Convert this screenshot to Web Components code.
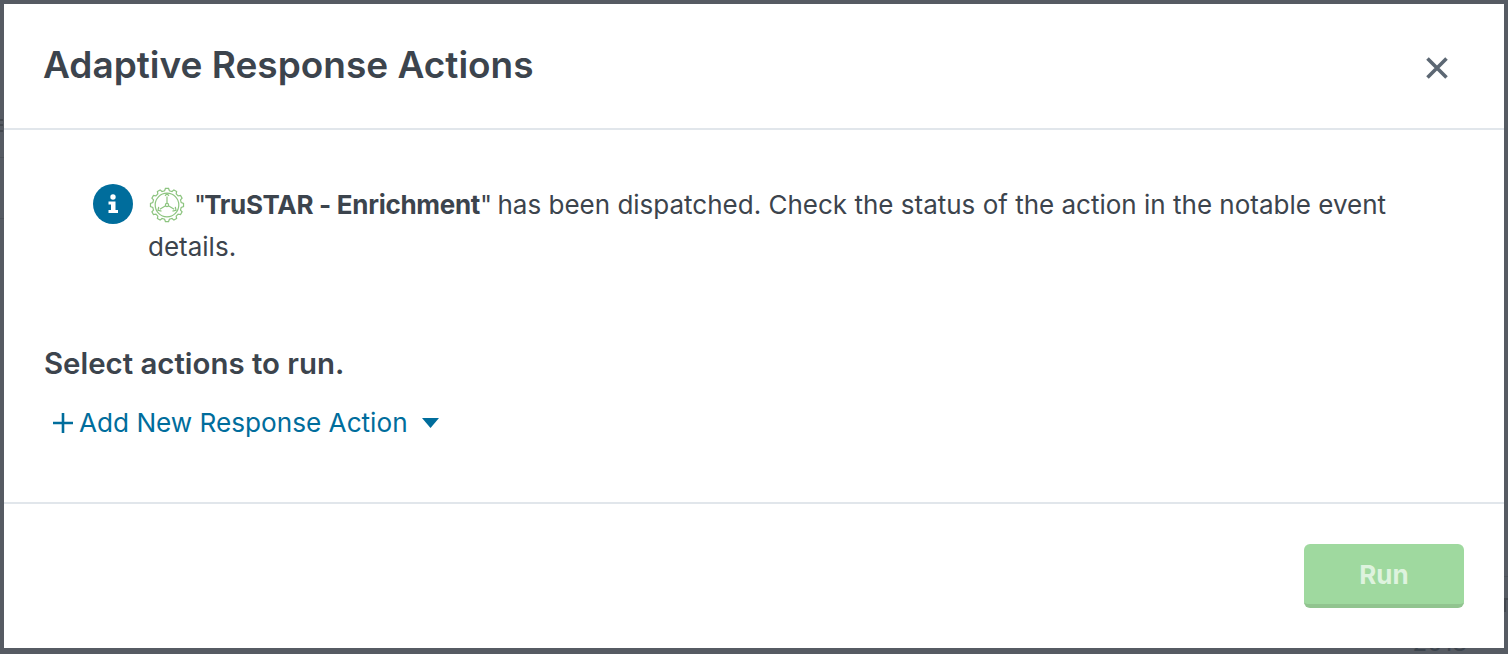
<!DOCTYPE html>
<html>
<head>
<meta charset="utf-8">
<title>Adaptive Response Actions</title>
<style>
html, body { margin: 0; height: 100%; overflow: hidden; }
body { font-family: Inter, "Liberation Sans", sans-serif; color: #3c444d; }
</style>
</head>
<body>
<template id="modal-tpl">
  <style>
  :host {
    display: block;
    height: 654px;
    box-sizing: border-box;
    padding: 4px 4px 6px 4px;
    background: #565b63;
    position: relative;
    overflow: hidden;
  }
  section {
    height: 100%;
    background: #fff;
    display: flex;
    flex-direction: column;
    position: relative;
    z-index: 1;
  }
  header {
    height: 126px;
    box-sizing: border-box;
    padding: 0 56px 0 39px;
    display: flex;
    align-items: center;
    justify-content: space-between;
    border-bottom: 2px solid #e1e6eb;
  }
  h1 {
    margin: 0 0 3px 0;
    font-size: 37px;
    font-weight: 600;
    color: #3c444d;
  }
  header svg { display: block; margin-top: 4px; }
  .body { flex: 1; display: flex; flex-direction: column; }
  footer {
    height: 146px;
    box-sizing: border-box;
    border-top: 2px solid #e1e6eb;
    padding: 40px 40px 0 0;
    display: flex;
    justify-content: flex-end;
    align-items: flex-start;
  }
  /* bits of the page behind the backdrop */
  .year { position: absolute; color: #3c444d; right: 41px; top: 628px; font-size: 24px; line-height: 30px; }
  .mark { position: absolute; height: 1px; background: #4d5259; }
  .dark { height: 2px; background: #43484f; }
  </style>
  <span class="year">2018</span>
  <div class="mark dark" style="left:0;width:3px;top:119px"></div>
  <div class="mark dark" style="left:0;width:3px;top:124px"></div>
  <div class="mark dark" style="left:0;width:3px;top:130px"></div>
  <div class="mark" style="left:0;width:4px;top:157px"></div>
  <div class="mark" style="left:0;width:4px;top:218px"></div>
  <div class="mark" style="right:0;width:4px;top:576px"></div>
  <div class="mark dark" style="right:0;width:3px;top:598px"></div>
  <div class="mark dark" style="right:2px;width:2px;height:14px;top:598px"></div>
  <section>
    <header>
      <h1></h1>
      <svg width="22" height="22" viewBox="0 0 22 22" fill="none" stroke="#5c6773" stroke-width="3.6">
        <path d="M1.5 1.5 L20.5 20.5 M20.5 1.5 L1.5 20.5"/>
      </svg>
    </header>
    <div class="body"><slot></slot></div>
    <footer><slot name="footer"></slot></footer>
  </section>
</template>

<template id="notice-tpl">
  <style>
  :host {
    display: block;
    padding: 54px 100px 0 89px;
  }
  .row { display: flex; gap: 15px; align-items: flex-start; }
  .info { flex: none; display: block; }
  p {
    margin: 0;
    font-size: 26px;
    line-height: 42px;
    color: #3c444d;
  }
  .gear { display: inline-block; vertical-align: -9px; margin: 0 9px 0 1px; }
  </style>
  <div class="row">
    <svg class="info" width="40" height="40" viewBox="0 0 40 40">
      <circle cx="20" cy="20" r="20" fill="#006d9c"/>
      <circle cx="20" cy="13" r="2.7" fill="#fff"/>
      <path d="M15.5 17.5 H22.5 V26 H25 V29 H15.5 V26 H18 V20.5 H15.5 Z" fill="#fff"/>
    </svg>
    <p><svg class="gear" width="36" height="36" viewBox="0 0 36 36" fill="none" stroke="#8cc47f" stroke-width="1.2">
      <path class="teeth"/>
      <circle cx="18" cy="18" r="11.8"/>
      <circle cx="18" cy="18" r="1.6"/>
      <path d="M18 16.4 V9.5 M16 8.8 L18 6.9 L20 8.8 M16.6 18.8 L10.8 22.2 M9.7 19.9 L9 23.4 L12.5 24.2 M19.4 18.8 L25.2 22.2 M26.3 19.9 L27 23.4 L23.5 24.2"/>
    </svg><slot></slot></p>
  </div>
</template>

<template id="actions-tpl">
  <style>
  :host {
    display: block;
    padding: 76px 40px 0 40px;
  }
  h2 {
    margin: 0;
    font-size: 29.4px;
    line-height: 40px;
    font-weight: 600;
    color: #3c444d;
  }
  a {
    display: inline-flex;
    align-items: center;
    margin: 19px 0 0 9px;
    color: #006d9c;
    font-size: 26.15px;
    line-height: 40px;
  }
  .plus { margin-right: 6px; }
  .caret { margin-left: 14px; }
  </style>
  <h2><slot name="title"></slot></h2>
  <a>
    <svg class="plus" width="20" height="20" viewBox="0 0 20 20" stroke="#006d9c" stroke-width="2.6">
      <path d="M0 10 H20 M10 0 V20"/>
    </svg>
    <slot name="link"></slot>
    <svg class="caret" width="17" height="10" viewBox="0 0 17 10"><path d="M0 0 H17 L8.5 10 Z" fill="#006d9c"/></svg>
  </a>
</template>

<template id="button-tpl">
  <style>
  :host {
    display: block;
    width: 160px;
    height: 64px;
    box-sizing: border-box;
    border-radius: 6px;
    background: #9fd99f;
    border-bottom: 4px solid #91c48f;
    color: #def3de;
    font-size: 26px;
    font-weight: 700;
    line-height: 62px;
    text-align: center;
  }
  </style>
  <slot></slot>
</template>

<arm-modal>
  <arm-notice><span style="letter-spacing:-2px">"</span><b style="font-size:26px;letter-spacing:-.3px;font-weight:700">TruSTAR - Enrichment</b><span style="letter-spacing:-2px">"</span> has been dispatched. Check the status of the action in the notable event details.</arm-notice>
  <arm-actions>
    <span slot="title">Select actions to run.</span>
    <span slot="link">Add New Response Action</span>
  </arm-actions>
  <arm-button slot="footer">Run</arm-button>
</arm-modal>

<script>
class TplElement extends HTMLElement {
    constructor(id) {
        super();
        this.attachShadow({ mode: 'open' });
        this.shadowRoot.appendChild(document.getElementById(id).content.cloneNode(true));
    }
}

class ArmModal extends TplElement {
    constructor() {
        super('modal-tpl');
        this.shadowRoot.querySelector('h1').textContent = 'Adaptive Response Actions';
    }
}

// outline of a cog around the middle of the 36 box
function cogPath(teeth, inner, outer) {
    const step = Math.PI * 2 / teeth
    let d = ''
    for(let i = 0; i < teeth; i++) {
        const a = i * step - Math.PI / 2
        const pts = [[inner, a - step * .32], [outer, a - step * .18], [outer, a + step * .18], [inner, a + step * .32]]
        pts.forEach(([r, t]) => {
            d += (d ? 'L' : 'M') + (18 + r * Math.cos(t)).toFixed(2) + ' ' + (18 + r * Math.sin(t)).toFixed(2)
        })
    }
    return d + 'Z'
}

class ArmNotice extends TplElement {
    constructor() {
        super('notice-tpl');
        this.shadowRoot.querySelector('.teeth').setAttribute('d', cogPath(12, 14.4, 16.6));
    }
}

class ArmActions extends TplElement {
    constructor() { super('actions-tpl'); }
}

class ArmButton extends TplElement {
    constructor() { super('button-tpl'); }
}

customElements.define('arm-modal', ArmModal);
customElements.define('arm-notice', ArmNotice);
customElements.define('arm-actions', ArmActions);
customElements.define('arm-button', ArmButton);
</script>
</body>
</html>
